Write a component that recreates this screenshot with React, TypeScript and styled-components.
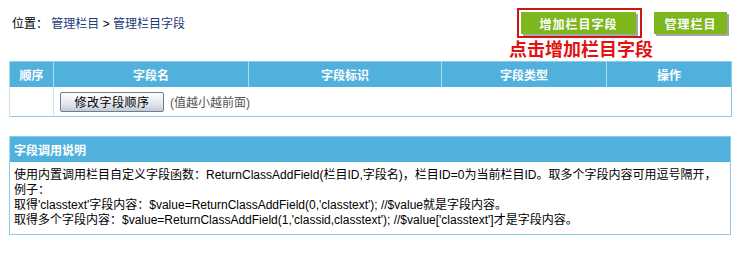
import React from 'react';
import styled, { createGlobalStyle } from 'styled-components';

const GlobalStyle = createGlobalStyle`
  html, body {
    margin: 0;
    padding: 0;
    background: #fff;
  }
  body {
    font-family: 'Liberation Sans', 'Noto Sans CJK SC', sans-serif;
    font-size: 12px;
    color: #000;
  }
`;

interface Column {
  title: string;
  width: number;
}

const COLUMNS: Column[] = [
  { title: '顺序', width: 44 },
  { title: '字段名', width: 195 },
  { title: '字段标识', width: 193 },
  { title: '字段类型', width: 165 },
  { title: '操作', width: 125 },
];

const Page = styled.div`
  width: 722px;
  padding: 0 17px 20px 9px;
`;

const TopBar = styled.div`
  display: flex;
  justify-content: space-between;
  height: 61px;
`;

const Crumbs = styled.div`
  padding: 17px 0 0 3px;
  line-height: 15px;
`;

const CrumbLink = styled.a`
  color: #1b3a78;
  text-decoration: none;
`;

const Actions = styled.div`
  display: flex;
  flex-direction: column;
  align-items: flex-start;
  padding: 8px 4px 0 0;
`;

const ButtonRow = styled.div`
  display: flex;
  align-items: flex-start;
  gap: 12px;
  margin-left: 8px;
`;

const Highlight = styled.div`
  border: 2px solid #d01515;
  padding: 2px 4px 0 2px;
  height: 24px;
`;

const GreenButton = styled.a<{ $width: number }>`
  display: flex;
  align-items: center;
  justify-content: center;
  width: ${({ $width }) => $width}px;
  height: 22px;
  margin-top: ${({ $width }) => ($width < 100 ? 4 : 0)}px;
  background: #7cb71e;
  color: #fff;
  font-weight: bold;
  font-size: 12px;
  letter-spacing: 1px;
  text-decoration: none;
  box-shadow: 2px 2px 0 #a5a5a5;
  cursor: pointer;
`;

const Callout = styled.div`
  margin-top: 1px;
  color: #e01212;
  font-weight: bold;
  font-size: 18px;
  line-height: 23px;
`;

const Table = styled.table`
  width: 722px;
  border-collapse: collapse;
  border: 1px solid #8ecbe8;
  table-layout: fixed;
`;

const HeadCell = styled.th<{ $align?: string }>`
  height: 25px;
  padding: 0 4px;
  background: #50b1dd;
  color: #fff;
  font-weight: bold;
  text-align: ${({ $align }) => $align || 'center'};
  border-left: 1px solid #a9dbf1;
`;

const BodyCell = styled.td`
  height: 29px;
  padding: 0 4px;
  border-left: 1px solid #c6e4f3;
`;

const ButtonCell = styled.div`
  display: flex;
  align-items: center;
  gap: 6px;
  padding-left: 2px;
`;

const GrayButton = styled.button`
  width: 104px;
  height: 20px;
  padding: 0;
  border: 1px solid #6f7d90;
  border-radius: 2px;
  background: linear-gradient(#ffffff, #e3e6ee 60%, #c4c9d6);
  font-family: inherit;
  font-size: 12px;
  color: #000;
  letter-spacing: 0.5px;
`;

const Hint = styled.span`
  color: #555;
`;

const NoteTable = styled(Table)`
  margin-top: 19px;
`;

const NoteCell = styled.td`
  padding: 6px 4px 6px;
  line-height: 15px;
`;

export default function App() {
  return (
    <>
      <GlobalStyle />
      <Page>
        <TopBar>
          <Crumbs>
            位置： <CrumbLink href="#">管理栏目</CrumbLink> &gt;{' '}
            <CrumbLink href="#">管理栏目字段</CrumbLink>
          </Crumbs>
          <Actions>
            <ButtonRow>
              <Highlight>
                <GreenButton $width={115}>增加栏目字段</GreenButton>
              </Highlight>
              <GreenButton $width={73}>管理栏目</GreenButton>
            </ButtonRow>
            <Callout>点击增加栏目字段</Callout>
          </Actions>
        </TopBar>

        <Table>
          <colgroup>
            {COLUMNS.map((c) => (
              <col key={c.title} style={{ width: c.width }} />
            ))}
          </colgroup>
          <thead>
            <tr>
              {COLUMNS.map((c) => (
                <HeadCell key={c.title}>{c.title}</HeadCell>
              ))}
            </tr>
          </thead>
          <tbody>
            <tr>
              <BodyCell />
              <BodyCell colSpan={4}>
                <ButtonCell>
                  <GrayButton>修改字段顺序</GrayButton>
                  <Hint>(值越小越前面)</Hint>
                </ButtonCell>
              </BodyCell>
            </tr>
          </tbody>
        </Table>

        <NoteTable>
          <thead>
            <tr>
              <HeadCell $align="left">字段调用说明</HeadCell>
            </tr>
          </thead>
          <tbody>
            <tr>
              <NoteCell>
                使用内置调用栏目自定义字段函数：ReturnClassAddField(栏目ID,字段名)，栏目ID=0为当前栏目ID。取多个字段内容可用逗号隔开，
                <br />
                例子：
                <br />
                取得'classtext'字段内容：$value=ReturnClassAddField(0,'classtext'); //$value就是字段内容。
                <br />
                取得多个字段内容：$value=ReturnClassAddField(1,'classid,classtext'); //$value['classtext']才是字段内容。
              </NoteCell>
            </tr>
          </tbody>
        </NoteTable>
      </Page>
    </>
  );
}
